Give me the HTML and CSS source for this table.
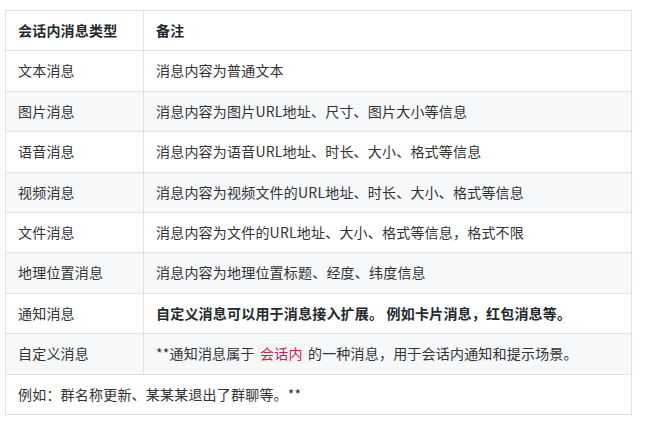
FILE: index.html
```html
<!DOCTYPE html>
<html lang="zh">
<head>
<meta charset="utf-8">
<link rel="stylesheet" href="styles.css">
</head>
<body>
<table class="msg-table">
  <thead>
    <tr><th class="col-type">会话内消息类型</th><th>备注</th></tr>
  </thead>
  <tbody>
    <tr><td>文本消息</td><td>消息内容为普通文本</td></tr>
    <tr><td>图片消息</td><td>消息内容为图片URL地址、尺寸、图片大小等信息</td></tr>
    <tr><td>语音消息</td><td>消息内容为语音URL地址、时长、大小、格式等信息</td></tr>
    <tr><td>视频消息</td><td>消息内容为视频文件的URL地址、时长、大小、格式等信息</td></tr>
    <tr><td>文件消息</td><td>消息内容为文件的URL地址、大小、格式等信息，格式不限</td></tr>
    <tr><td>地理位置消息</td><td>消息内容为地理位置标题、经度、纬度信息</td></tr>
    <tr><td>通知消息</td><td><strong>自定义消息可以用于消息接入扩展。 例如卡片消息，红包消息等。</strong></td></tr>
    <tr><td>自定义消息</td><td>**通知消息属于 <code class="inline-code">会话内</code> 的一种消息，用于会话内通知和提示场景。</td></tr>
    <tr><td colspan="2">例如：群名称更新、某某某退出了群聊等。**</td></tr>
  </tbody>
</table>
</body>
</html>
```
FILE: styles.css
```css
html, body {
  margin: 0;
  padding: 0;
  background: #fff;
}
body {
  padding: 10px 0 0 5px;
  font-family: "Noto Sans CJK SC", "Microsoft YaHei", sans-serif;
  font-size: 14px;
  color: #333;
}
.msg-table {
  border-collapse: collapse;
  width: 627px;
  table-layout: fixed;
}
.msg-table th,
.msg-table td {
  border: 1px solid #dfe2e5;
  padding: 9px 12px;
  line-height: 21.4px;
  text-align: left;
  white-space: nowrap;
  overflow: visible;
  letter-spacing: 0.2px;
}
.msg-table th {
  font-weight: bold;
  color: #24292e;
}
.col-type {
  width: 113px;
}
.msg-table tbody tr:nth-child(2n) {
  background: #f6f8fa;
}
.msg-table strong {
  font-weight: bold;
  color: #24292e;
}
.inline-code {
  font-family: "Noto Sans CJK SC", sans-serif;
  font-size: 14px;
  color: #c7254e;
  background: #f3f4f4;
  padding: 0 2px;
  border-radius: 3px;
}
```
